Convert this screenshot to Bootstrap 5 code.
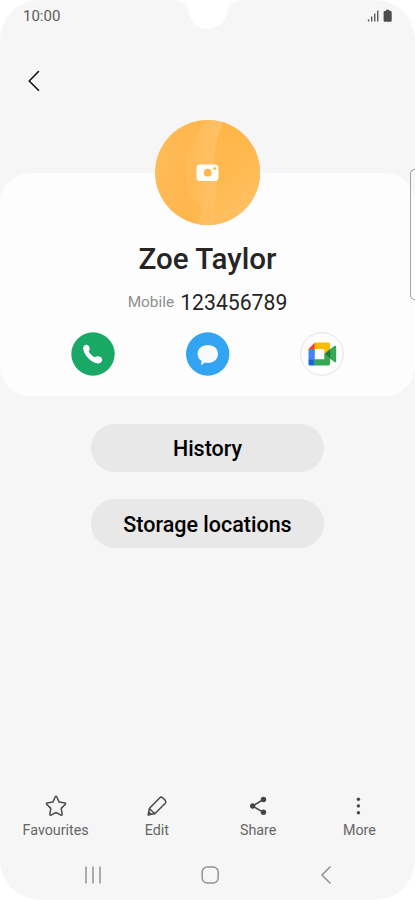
<!DOCTYPE html>
<html lang="en">
<head>
<meta charset="utf-8">
<meta name="viewport" content="width=device-width, initial-scale=1">
<title>Contact</title>
<link href="https://cdn.jsdelivr.net/npm/bootstrap@5.3.0/dist/css/bootstrap.min.css" rel="stylesheet">
<style>
body{background:#fff;font-family:Roboto,"Liberation Sans",sans-serif;color:#252525}
svg{display:block;flex:none}
.phone{width:415px;height:900px;background:#f6f6f6;border-radius:40px}
.notch{top:0;left:174px}
.status{height:32px;padding:0 23px 0 23px;font-size:15px;color:#5c5c5c}
.topbar{height:98px;padding-left:28px}
.back{width:24px;height:98px}
.contact{height:223px;margin-top:43px;background:#fdfdfd;border-radius:30px}
.avatar{margin-top:-53px;width:105px;height:105px}
.person{font-size:29.6px;line-height:34px;font-weight:500;margin-top:17px}
.number-row{height:26px;line-height:26px;margin-top:13px;gap:6px}
.kind{font-size:15.4px;color:#8f8f8f}
.digits{font-size:21.2px;padding-top:2px}
.actions{margin-top:18px;padding:0 71px}
.actions svg{margin-top:-1px}
.pill{width:233.5px;height:48.5px;background:#e8e8e8;font-size:21.5px;font-weight:500;color:#000;line-height:1;border:0;padding:2px 0 0}
.pills{padding-top:27.5px;gap:27px}
.tools{padding:0 5px 0 5px;font-size:14.3px;line-height:18px;color:#666}
.tools .col{gap:3px}
.sysnav{height:51px;margin-top:10px;padding:0 82px 0 84px}
.edge{top:168.5px;right:0;width:5px;height:131px;border:1px solid #a3a3a3;border-right:0;border-radius:5px 0 0 5px}
</style>
<script src="https://cdn.jsdelivr.net/npm/bootstrap@5.3.0/dist/js/bootstrap.bundle.min.js"></script>
</head>
<body>
<main class="phone position-relative overflow-hidden d-flex flex-column">
  <svg class="notch position-absolute" width="68" height="30" viewBox="0 0 68 30"><path d="M0 0C9 0 14 6 15 12C17 23 24 29 33.500 29S51 23 53 12C54 6 59 0 68 0Z" fill="#fff"/></svg>
  <header class="status d-flex align-items-center justify-content-between">
    <span>10:00</span>
    <svg width="25" height="14" viewBox="0 0 25 14" fill="#4d4d4d"><path d="M.9 10.500h1.300v2H.9zM4 7.500h1.300v5H4zM7.100 4.500h1.300v8H7.100zM10.100 1.500h1.300v11h-1.300z"/><path d="M18.900.700h3.500v1.200h1a1.300 1.300 0 0 1 1.300 1.300v8.300a1.300 1.300 0 0 1-1.300 1.300h-5.500a1.300 1.300 0 0 1-1.300-1.300V3.200a1.300 1.300 0 0 1 1.300-1.300h1z"/></svg>
  </header>
  <div class="topbar">
    <button class="btn back p-0 border-0 d-flex align-items-center" aria-label="Back"><svg width="14" height="22" viewBox="0 0 14 22" fill="none" stroke="#111" stroke-width="1.600" stroke-linecap="round" stroke-linejoin="round"><path d="M10.500 1.500L1.200 11l9.300 9.200"/></svg></button>
  </div>
  <section class="contact d-flex flex-column align-items-center">
    <svg class="avatar" viewBox="0 0 105 105">
      <defs>
        <linearGradient id="base" x1="0" x2="1" y1="0" y2=".2"><stop stop-color="#ffbd5b"/><stop offset=".4" stop-color="#ffb64e"/><stop offset="1" stop-color="#ffb94f"/></linearGradient>
        <linearGradient id="band" x1="0" x2="1"><stop offset=".1" stop-color="#ffbb57"/><stop offset=".5" stop-color="#ffc168"/></linearGradient>
        <linearGradient id="side" x1=".2" x2=".6" y1="0" y2="1"><stop stop-color="#ffb548"/><stop offset=".5" stop-color="#ffb94f"/><stop offset="1" stop-color="#ffc167"/></linearGradient>
        <clipPath id="round"><circle cx="52.500" cy="52.500" r="52.500"/></clipPath>
      </defs>
      <g clip-path="url(#round)">
        <path fill="url(#base)" d="M0 0h105v105H0z"/>
        <path fill="url(#band)" d="M52 0C42 13 31 25 31 43C31 60 31 74 40 80C49 86 47 95 41 105H105V0Z"/>
        <path fill="url(#side)" d="M69 0C60 20 57 40 61 58C64 75 57 87 60 105H105V0Z"/>
      </g>
      <rect x="41.500" y="44.500" width="22" height="16.500" rx="3.500" fill="#fffefa"/><circle cx="52.700" cy="52.700" r="3.900" fill="#ffb850"/><circle cx="59.600" cy="48.600" r="1.500" fill="#ffb850"/>
    </svg>
    <h1 class="person mb-0">Zoe Taylor</h1>
    <div class="number-row d-flex align-items-center"><span class="kind">Mobile</span><span class="digits">123456789</span></div>
    <div class="actions d-flex justify-content-between w-100">
      <svg width="44" height="44" viewBox="0 0 44 44"><circle cx="22" cy="22" r="21.700" fill="#19a865"/><path d="M12.200 16.600C11.800 14.200 14.400 12 16.500 13C18.300 13.800 19.400 16.300 18.400 18L17.700 19.200C18.500 21.500 21.500 24.400 23.700 25.200L25.700 24.500C27.500 23.900 30 24.700 31 26.700C31.900 28.800 29.700 31.500 26.800 31.500C21.200 31.400 12.700 23.300 12.200 16.600Z" fill="#fff"/></svg>
      <svg width="44" height="44" viewBox="0.500 0 44 44"><circle cx="22.200" cy="22" r="21.700" fill="#33a4f2"/><path d="M22.300 13.100C28.200 13.100 32.500 16.800 32.500 22S28.200 30.900 22.300 30.900C21.300 30.900 20.300 30.800 19.400 30.600C18.200 31.800 17 32.600 15.700 33C15.500 31.600 15.900 30.200 16.200 29.100C13.600 27.500 12.100 25 12.100 22C12.100 16.800 16.400 13.100 22.300 13.100Z" fill="#f7fbff"/></svg>
      <svg width="44" height="44" viewBox="0 0 44 44"><circle cx="22" cy="22" r="21.300" fill="#fefefe" stroke="#e3e3e6"/><path fill="#4285f4" d="M8.500 17h6.300v10.500H8.500z"/><path fill="#1967d2" d="M8.500 27.200h6.300v6.300H10a1.500 1.500 0 0 1-1.500-1.500z"/><path fill="#e94235" d="M14.800 10.500V17H8.500z"/><path fill="#fbbc04" d="M14.800 10.500h13.500a1.800 1.800 0 0 1 1.800 1.800v5.900L24.300 22v-5H14.800z"/><path fill="#34a853" d="M14.800 27.200h9.500v-5.200l5.800 4.500v5.200a1.800 1.800 0 0 1-1.800 1.800H14.800z"/><path fill="#34a853" d="M30 17.300l4.200-3.300c1-.700 2-.200 2 .800v14.400c0 1-.9 1.400-1.800.800L30 26.700z"/><path fill="#188038" d="M24.300 22l5.900-4.900v9.700z"/></svg>
    </div>
  </section>
  <section class="pills d-flex flex-column align-items-center">
    <button class="btn pill rounded-pill">History</button>
    <button class="btn pill rounded-pill">Storage locations</button>
  </section>
  <nav class="tools row g-0 mt-auto text-center">
    <div class="col d-flex flex-column align-items-center"><svg width="24" height="24" viewBox="0 0 24 24" fill="none" stroke="#4b4b4b" stroke-width="1.500" stroke-linejoin="round"><path d="M11.300 2.700Q12 1.800 12.700 2.700L15.100 8.100L21 8.900Q22 9.300 21.400 10.200L17.200 14.400L18.200 20.300Q18.100 21.600 17 21.100L12 18.500L7 21.100Q5.900 21.600 5.800 20.300L6.800 14.400L2.600 10.200Q2 9.300 3 8.900L8.900 8.100Z"/></svg>Favourites</div>
    <div class="col d-flex flex-column align-items-center"><svg width="24" height="24" viewBox="0 0 24 24" fill="none" stroke="#4b4b4b" stroke-width="1.500" stroke-linejoin="round"><path d="M3.300 20.800L4.300 14.500L14.800 3.700Q16.200 2.500 17.600 3.700L20.300 6.400Q21.500 7.800 20.300 9.200L9.800 19.700ZM4.300 14.500L9.800 19.700"/><path d="M3.300 20.800L3.800 18L6.200 20.200Z" fill="#4b4b4b"/></svg>Edit</div>
    <div class="col d-flex flex-column align-items-center"><svg width="24" height="24" viewBox="0 0 24 24" fill="#454545" stroke="#454545"><path d="M17.500 5.500L6.700 12l10.800 6.300" fill="none" stroke-width="1.500"/><g stroke="none"><circle cx="17.500" cy="5.500" r="2.700"/><circle cx="6.700" cy="12" r="2.700"/><circle cx="17.500" cy="18.300" r="2.700"/></g></svg>Share</div>
    <div class="col d-flex flex-column align-items-center"><svg width="24" height="24" viewBox="0 0 24 24" fill="#454545"><circle cx="11.400" cy="5.200" r="1.700"/><circle cx="11.400" cy="11.900" r="1.700"/><circle cx="11.400" cy="18.700" r="1.700"/></svg>More</div>
  </nav>
  <footer class="sysnav d-flex align-items-center justify-content-between">
    <svg width="18" height="20" viewBox="0 0 18 20" stroke="#929292" stroke-width="1.500"><path d="M2 1.500v17M9 1.500v17M16 1.500v17"/></svg>
    <svg width="20" height="20" viewBox="0.800 0 20 20" fill="none" stroke="#929292" stroke-width="1.500"><rect x="2" y="2" width="16" height="16" rx="5"/></svg>
    <svg width="14" height="20" viewBox="0 0 14 20" fill="none" stroke="#929292" stroke-width="1.500"><path d="M11.500 1.500L3 10l8.500 8.500"/></svg>
  </footer>
  <div class="edge position-absolute"></div>
</main>
</body>
</html>
